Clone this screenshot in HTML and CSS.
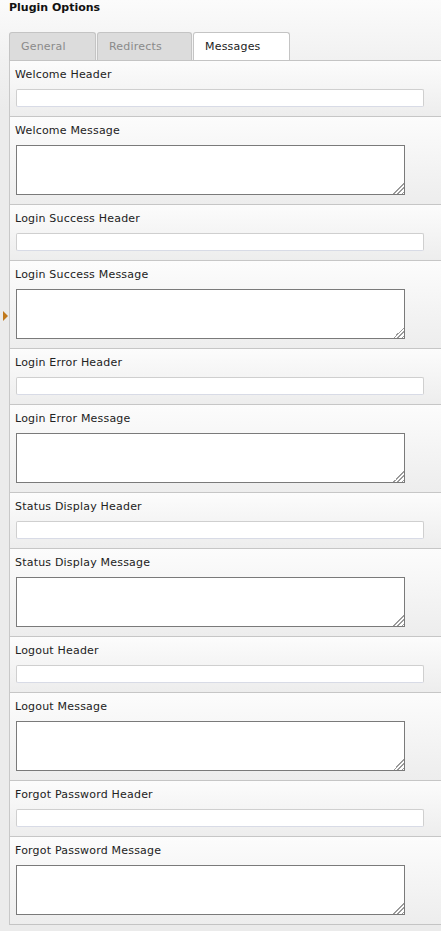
FILE: index.html
```html
<!DOCTYPE html>
<html>
<head>
<meta charset="utf-8">
<link rel="stylesheet" href="styles.css">
</head>
<body>
<h1 class="title">Plugin Options</h1>
<div class="tabs">
  <div class="tab tab-general">General</div>
  <div class="tab tab-redirects">Redirects</div>
  <div class="tab tab-messages active">Messages</div>
</div>
<div class="panel">
  <div class="row"><label class="label">Welcome Header</label><input class="text" type="text"></div>
  <div class="row"><label class="label">Welcome Message</label><textarea class="area"></textarea></div>
  <div class="row"><label class="label">Login Success Header</label><input class="text" type="text"></div>
  <div class="row"><label class="label">Login Success Message</label><textarea class="area"></textarea></div>
  <div class="row"><label class="label">Login Error Header</label><input class="text" type="text"></div>
  <div class="row"><label class="label">Login Error Message</label><textarea class="area"></textarea></div>
  <div class="row"><label class="label">Status Display Header</label><input class="text" type="text"></div>
  <div class="row"><label class="label">Status Display Message</label><textarea class="area"></textarea></div>
  <div class="row"><label class="label">Logout Header</label><input class="text" type="text"></div>
  <div class="row"><label class="label">Logout Message</label><textarea class="area"></textarea></div>
  <div class="row"><label class="label">Forgot Password Header</label><input class="text" type="text"></div>
  <div class="row"><label class="label">Forgot Password Message</label><textarea class="area"></textarea></div>
</div>
<div class="marker"></div>
</body>
</html>
```
FILE: styles.css
```css
html, body {
  margin: 0;
  padding: 0;
}
body {
  position: relative;
  min-height: 931px;
  font-family: "DejaVu Sans", Verdana, sans-serif;
  font-size: 11px;
  color: #222;
  background: linear-gradient(#fbfbfb 0, #f1f1f1 60px, #ebebeb 110px) no-repeat;
  background-color: #ebebeb;
}
.title {
  margin: 0;
  padding: 1px 0 0 9px;
  font-size: 11px;
  line-height: 14px;
  font-weight: bold;
  color: #111;
}
.tabs {
  display: flex;
  margin: 17px 0 0 9px;
  gap: 1px;
  height: 28px;
}
.tab {
  box-sizing: border-box;
  height: 28px;
  padding: 0 0 0 11px;
  line-height: 28px;
  letter-spacing: 0.2px;
  border: 1px solid #c4c4c4;
  border-bottom: none;
  border-radius: 3px 3px 0 0;
  background: #dcdcdc;
  color: #8a8a8a;
}
.tab-general { width: 87px; }
.tab-redirects { width: 95px; }
.tab-messages { width: 97px; }
.tab.active {
  background: #fff;
  color: #222;
}
.panel {
  margin-left: 9px;
  border-left: 1px solid #c8c8c8;
  border-top: 1px solid #c4c4c4;
  border-bottom: 1px solid #c4c4c4;
}
.row {
  display: flex;
  flex-direction: column;
  align-items: flex-start;
  padding: 7px 0 9px 6px;
  border-top: 1px solid #c6c6c6;
  background: linear-gradient(#fcfcfc, #ededed);
}
.row:first-child {
  border-top: none;
}
.label {
  margin-left: -1px;
  line-height: 14px;
  letter-spacing: 0.2px;
  margin-bottom: 7px;
}
.text {
  box-sizing: border-box;
  width: 408px;
  height: 18px;
  margin: 0;
  padding: 0 3px;
  border: 1px solid #cfcfcf;
  border-bottom-color: #d8dbe6;
  border-radius: 2px;
  background: #fff;
  outline: none;
}
.area {
  box-sizing: border-box;
  display: block;
  width: 389px;
  height: 50px;
  margin: 0;
  padding: 2px;
  border: 1px solid #7a7a7a;
  background-color: #fff;
  background-image:
    linear-gradient(to bottom right, #fff 50%, transparent 50%),
    repeating-linear-gradient(-45deg, #fff 0 1px, #9a9a9a 1px 2px, #fff 2px 3px);
  background-size: 11px 11px, 11px 11px;
  background-position: right bottom, right bottom;
  background-repeat: no-repeat;
  resize: none;
  outline: none;
}
.marker {
  position: absolute;
  left: 3px;
  top: 311px;
  width: 0;
  height: 0;
  border-top: 5px solid transparent;
  border-bottom: 5px solid transparent;
  border-left: 5px solid #c0781c;
}
```
